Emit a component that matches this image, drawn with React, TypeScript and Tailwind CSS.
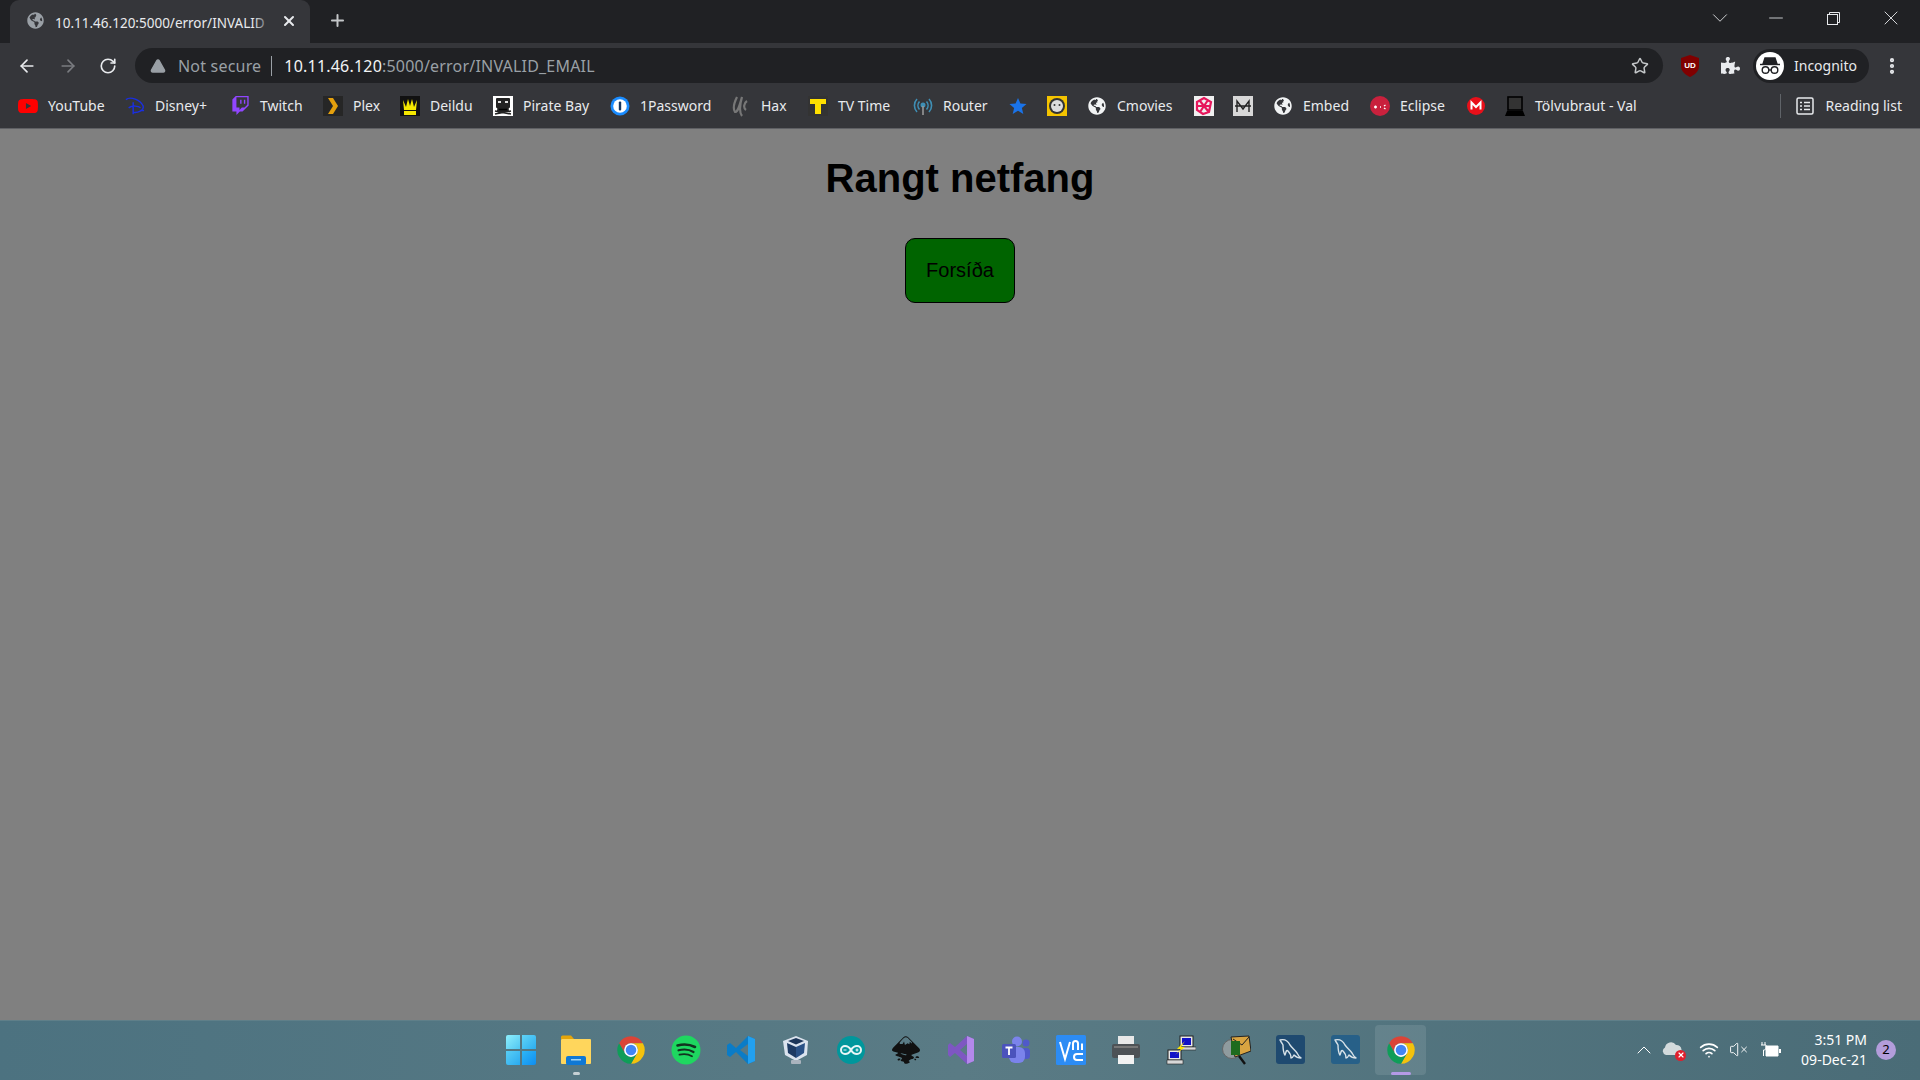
import React from "react";
import { ArrowLeft, ArrowRight, RotateCw, Star, ChevronDown, ChevronUp, Plus, X, Minus, EllipsisVertical, TriangleAlert, VolumeX, Wifi } from "lucide-react";
import { FaGlobeAmericas, FaPuzzlePiece } from "react-icons/fa";
import { SiInkscape, SiYoutube, SiTwitch } from "react-icons/si";

const Chrome = ({ size = 36 }: { size?: number }) => (
  <svg width={size} height={size} viewBox="0 0 48 48">
    <path d="M4.95 13A22 22 0 0 1 43.05 13L24 13A11 11 0 0 0 14.47 29.5Z" fill="#db4437" />
    <path d="M43.05 13A22 22 0 0 1 24 46L33.53 29.5A11 11 0 0 0 24 13Z" fill="#f4c20d" />
    <path d="M24 46A22 22 0 0 1 4.95 13L14.47 29.5A11 11 0 0 0 33.53 29.5Z" fill="#0f9d58" />
    <circle cx="24" cy="24" r="11" fill="#fff" />
    <circle cx="24" cy="24" r="8.5" fill="#4285f4" />
  </svg>
);

const Dolphin = () => (
  <svg width="25" height="25" viewBox="0 0 25 25" fill="none" stroke="#d8e2e8" strokeWidth="1.4" strokeLinejoin="round">
    <path d="M2 3C6 2 10 4 12 8C14 11 17 13 19 16C20 18 21 20 23 21C20 21 18 20 16 18C15 20 14 21 13 21C13 18 12 16 10 14C8 12 8 16 7 18C5 15 5 11 5 8C4 6 3 5 2 3Z" />
  </svg>
);

const bookmarks: { label?: string; icon: React.ReactNode; w: string }[] = [
  { label: "YouTube", w: "w-[107px]", icon: <SiYoutube size={20} color="#ff0000" /> },
  {
    label: "Disney+",
    w: "w-[105px]",
    icon: (
      <svg width="22" height="20" viewBox="0 0 22 20" fill="none" stroke="#1a2fe0" strokeWidth="1.6">
        <path d="M1 3C6 -1 17 3 20 10C21 15 14 18 9 17" />
        <path d="M9 6V19M4 12C8 9 15 10 17 12M17 15h4" />
      </svg>
    ),
  },
  { label: "Twitch", w: "w-[93px]", icon: <SiTwitch size={19} color="#9146ff" /> },
  {
    label: "Plex",
    w: "w-[77px]",
    icon: (
      <svg width="20" height="20" viewBox="0 0 20 20">
        <rect width="20" height="20" fill="#262626" />
        <path d="M5 2H10L15 10L10 18H5L10 10Z" fill="#e5a00d" />
      </svg>
    ),
  },
  {
    label: "Deildu",
    w: "w-[93px]",
    icon: (
      <svg width="20" height="20" viewBox="0 0 20 20">
        <rect width="20" height="20" fill="#111" />
        <path d="M3 4L6 11L8 3L10 10L12 3L14 11L17 4L16 14H4Z" fill="#f5e800" />
        <rect x="4" y="15" width="12" height="4" fill="#f5e800" />
      </svg>
    ),
  },
  {
    label: "Pirate Bay",
    w: "w-[117px]",
    icon: (
      <svg width="20" height="20" viewBox="0 0 20 20">
        <rect width="20" height="20" fill="#fff" />
        <rect x="3" y="2" width="14" height="10" rx="1" fill="#222" />
        <rect x="5" y="5" width="3" height="2" fill="#ddd" />
        <rect x="12" y="5" width="3" height="2" fill="#ddd" />
        <path d="M2 15L18 18M18 15L2 18M5 12h10v3H5Z" stroke="#222" strokeWidth="1.6" />
      </svg>
    ),
  },
  {
    label: "1Password",
    w: "w-[121px]",
    icon: (
      <svg width="20" height="20" viewBox="0 0 20 20">
        <circle cx="10" cy="10" r="9.5" fill="#1a8cff" />
        <circle cx="10" cy="10" r="6.8" fill="#fff" />
        <rect x="8.8" y="5.5" width="2.4" height="9" rx="1" fill="#16365f" />
      </svg>
    ),
  },
  {
    label: "Hax",
    w: "w-[77px]",
    icon: (
      <svg width="20" height="22" viewBox="0 0 20 22" fill="none" stroke="#777" strokeWidth="2.2">
        <path d="M6 2C3 8 2 14 4 17C7 17 8 12 11 2C9 9 8 17 11 21M16 6C13 8 12 13 15 15" />
      </svg>
    ),
  },
  {
    label: "TV Time",
    w: "w-[105px]",
    icon: (
      <svg width="20" height="20" viewBox="0 0 20 20">
        <rect width="20" height="20" fill="#333" />
        <path d="M2 3H18V8H13V18H7V8H2Z" fill="#ffe000" />
      </svg>
    ),
  },
  {
    label: "Router",
    w: "w-[95px]",
    icon: (
      <svg width="20" height="20" viewBox="0 0 20 20" fill="none" stroke="#3f8fb5" strokeWidth="1.6">
        <path d="M6.5 5.5a6 6 0 0 0 0 8M13.5 5.5a6 6 0 0 1 0 8M4 3a9.5 9.5 0 0 0 0 13M16 3a9.5 9.5 0 0 1 0 13" />
        <circle cx="10" cy="9" r="1.7" fill="#3f8fb5" />
        <path d="M10 10v9" stroke="#999" />
      </svg>
    ),
  },
  {
    w: "w-[39px]",
    icon: (
      <svg width="18" height="18" viewBox="0 0 20 20">
        <path d="M10 1L12.7 7.2L19.5 7.8L14.3 12.2L15.9 19L10 15.4L4.1 19L5.7 12.2L.5 7.8L7.3 7.2Z" fill="#1a73e8" />
      </svg>
    ),
  },
  {
    w: "w-[40px]",
    icon: (
      <svg width="20" height="20" viewBox="0 0 20 20">
        <rect width="20" height="20" fill="#f5c400" />
        <circle cx="10" cy="10" r="8" fill="#333" />
        <circle cx="10" cy="10" r="6" fill="#ddd" />
        <circle cx="7.5" cy="9" r="1" fill="#333" />
        <circle cx="12.5" cy="9" r="1" fill="#333" />
      </svg>
    ),
  },
  { label: "Cmovies", w: "w-[107px]", icon: <FaGlobeAmericas size={18} color="#f1f3f4" /> },
  {
    w: "w-[39px]",
    icon: (
      <svg width="20" height="20" viewBox="0 0 20 20">
        <rect width="20" height="20" fill="#f0f0f0" />
        <path d="M3 6L10 2L17 6L15 16L9 18L3 14ZM6 5L14 15M14 4L6 16M3 10H17" fill="none" stroke="#e6175c" strokeWidth="2.2" />
      </svg>
    ),
  },
  {
    w: "w-[40px]",
    icon: (
      <svg width="20" height="20" viewBox="0 0 20 20">
        <rect width="20" height="20" fill="#d8d8d8" />
        <path d="M4 16V5L10 13L16 5V16M2 10H18" fill="none" stroke="#222" strokeWidth="1.4" />
      </svg>
    ),
  },
  { label: "Embed", w: "w-[97px]", icon: <FaGlobeAmericas size={18} color="#f1f3f4" /> },
  {
    label: "Eclipse",
    w: "w-[96px]",
    icon: (
      <svg width="20" height="20" viewBox="0 0 20 20">
        <circle cx="10" cy="10" r="10" fill="#c9213d" />
        <path d="M4 11h3M5.5 9.5v3M10 11h1M14 10l1.5-1M14 12l1.5 1" stroke="#fff" strokeWidth="1.4" />
      </svg>
    ),
  },
  {
    w: "w-[39px]",
    icon: (
      <svg width="18" height="18" viewBox="0 0 18 18">
        <circle cx="9" cy="9" r="9" fill="#e9101a" />
        <path d="M4.5 12.5V5.5L9 10L13.5 5.5V12.5" fill="none" stroke="#fff" strokeWidth="2" />
      </svg>
    ),
  },
  {
    label: "Tölvubraut - Val",
    w: "w-auto",
    icon: (
      <svg width="20" height="20" viewBox="0 0 20 20">
        <rect x="3" y="1" width="14" height="13" fill="none" stroke="#000" strokeWidth="1.6" />
        <rect x="4" y="2" width="12" height="11" fill="#333" />
        <path d="M0 20L2 15H18L20 20Z" fill="#000" />
      </svg>
    ),
  },
];

const Windows = () => (
  <div className="grid h-[30px] w-[30px] grid-cols-2 gap-[2px]">
    <span className="rounded-tl-[2px] bg-gradient-to-br from-[#8deffc] to-[#4fc6f2]" />
    <span className="rounded-tr-[2px] bg-gradient-to-br from-[#5fd4f7] to-[#2aaef0]" />
    <span className="rounded-bl-[2px] bg-gradient-to-br from-[#58cef5] to-[#28aaf0]" />
    <span className="rounded-br-[2px] bg-gradient-to-br from-[#2eb6f5] to-[#0f8df0]" />
  </div>
);

const taskbarIcons: { key: string; icon: React.ReactNode; active?: boolean }[] = [
  { key: "start", icon: <Windows /> },
  {
    key: "files",
    icon: (
      <svg width="32" height="30" viewBox="0 0 32 30">
        <path d="M1 2a1.5 1.5 0 0 1 1.5-1.5H11L14 4H1Z" fill="#e5a50a" />
        <rect x="1" y="4" width="30" height="25" rx="1" fill="#ffd65c" />
        <rect x="6" y="21" width="20" height="9" rx="2" fill="#0f78d4" />
        <rect x="11" y="24" width="10" height="1.5" fill="#9fd4f5" />
      </svg>
    ),
  },
  { key: "chrome", icon: <Chrome size={30} /> },
  {
    key: "spotify",
    icon: (
      <svg width="30" height="30" viewBox="0 0 30 30" fill="none" stroke="#12331f" strokeLinecap="round">
        <circle cx="15" cy="15" r="14.5" fill="#1ed760" stroke="none" />
        <path d="M6.5 10.5C12 9 19 9.5 24 12" strokeWidth="2.6" />
        <path d="M7.5 15.3C12.5 14 18.5 14.5 22.5 17" strokeWidth="2.2" />
        <path d="M8.5 19.7C13 18.7 17.5 19.2 21 21.2" strokeWidth="1.8" />
      </svg>
    ),
  },
  {
    key: "vscode",
    icon: (
      <svg width="30" height="30" viewBox="0 0 30 30">
        <path d="M22 1L29 4V26L22 29L10 17L4 22L1 20V10L4 8L10 13ZM22 9L14 15L22 21Z" fill="#0a7cc7" />
        <path d="M22 1L29 4V26L22 29Z" fill="#22a0ef" />
      </svg>
    ),
  },
  {
    key: "vbox",
    icon: (
      <svg width="28" height="30" viewBox="0 0 28 30">
        <path d="M14 1L26 6L25 20L14 26L3 20L1 6Z" fill="#dbe3ee" />
        <path d="M5 8L14 12V23L6 18Z" fill="#1d3a63" />
        <path d="M23 8L14 12V23L22 18Z" fill="#2a5186" />
        <path d="M6 6L14 3L22 6L14 9.5Z" fill="#1c3559" />
        <rect x="9" y="25" width="10" height="4" rx="1" fill="#aab3bd" />
      </svg>
    ),
  },
  {
    key: "arduino",
    icon: (
      <svg width="28" height="28" viewBox="0 0 28 28" fill="none" stroke="#e8f6f6" strokeWidth="2">
        <circle cx="14" cy="14" r="14" fill="#00979c" stroke="none" />
        <path d="M14 14C12 10.5 10 10 8 10A4 4 0 0 0 8 18C10 18 12 17.5 14 14C16 10.5 18 10 20 10A4 4 0 0 1 20 18C18 18 16 17.5 14 14Z" />
        <path d="M6.5 14H9.5M18.5 14H21.5M20 12.5V15.5" strokeWidth="1.2" />
      </svg>
    ),
  },
  {
    key: "inkscape",
    icon: <SiInkscape size={28} color="#111" />,
  },
  {
    key: "vs",
    icon: (
      <svg width="28" height="30" viewBox="0 0 28 30">
        <path d="M20 1L27 4V26L20 29L8 18L3 22L1 20V10L3 8L8 12ZM20 9L13 15L20 21Z" fill="#7e57c2" />
        <path d="M20 1L27 4V26L20 29Z" fill="#b388eb" />
      </svg>
    ),
  },
  {
    key: "teams",
    icon: (
      <svg width="30" height="28" viewBox="0 0 30 28">
        <circle cx="25" cy="7" r="3.5" fill="#5059c9" />
        <rect x="20" y="12" width="9" height="11" rx="3.5" fill="#5059c9" />
        <circle cx="16" cy="5.5" r="5" fill="#7b83eb" />
        <rect x="8" y="11" width="16" height="16" rx="6" fill="#7b83eb" />
        <rect x="1" y="8" width="14" height="14" rx="1.5" fill="#4b53bc" />
        <path d="M4.5 11.5H11.5M8 11.5V19" stroke="#fff" strokeWidth="1.8" />
      </svg>
    ),
  },
  {
    key: "vnc",
    icon: (
      <svg width="30" height="30" viewBox="0 0 30 30" fill="none" stroke="#fff" strokeWidth="2">
        <rect width="30" height="30" rx="1.5" fill="#2c8cf4" stroke="none" />
        <path d="M4 7L9 24L14 7M17 15V8.5A2.5 2.5 0 0 1 22 8.5V15M26 8.5V15" />
        <path d="M27 19H21A3 3 0 0 0 21 25H27" />
      </svg>
    ),
  },
  {
    key: "printer",
    icon: (
      <svg width="30" height="30" viewBox="0 0 30 30">
        <rect x="7" y="1" width="16" height="9" fill="#e8e8e8" />
        <rect x="1" y="9" width="28" height="14" rx="2" fill="#4d5256" />
        <rect x="3" y="11" width="24" height="2" fill="#777" />
        <rect x="7" y="20" width="16" height="9" fill="#f2f2f2" />
      </svg>
    ),
  },
  {
    key: "putty",
    icon: (
      <svg width="30" height="30" viewBox="0 0 30 30">
        <rect x="14" y="1" width="13" height="11" fill="#e8e8e8" stroke="#222" />
        <rect x="16" y="3" width="9" height="7" fill="#1111c8" />
        <rect x="14" y="12" width="16" height="3" fill="#d8d8d8" stroke="#222" strokeWidth=".6" />
        <rect x="2" y="15" width="13" height="10" fill="#e8e8e8" stroke="#222" />
        <rect x="4" y="17" width="9" height="6" fill="#1111c8" />
        <rect x="1" y="25" width="16" height="4" fill="#d8d8d8" stroke="#222" strokeWidth=".6" />
        <path d="M19 6L11 14L15 14L9 20L19 12L15 12Z" fill="#ffe600" />
      </svg>
    ),
  },
  {
    key: "sniff",
    icon: (
      <svg width="30" height="30" viewBox="0 0 30 30">
        <circle cx="11" cy="14" r="9.5" fill="#8f9b9e" stroke="#666" />
        <path d="M18 21L24 29" stroke="#111" strokeWidth="2.4" />
        <path d="M10 2L28 1L30 16L14 22Z" fill="#d9a441" stroke="#222" />
        <path d="M12 4L21 10L28 2" fill="none" stroke="#222" />
        <rect x="10" y="6" width="9" height="14" fill="#1e6b1e" />
      </svg>
    ),
  },
  { key: "mysql1", icon: <span className="flex h-[29px] w-[29px] items-center justify-center rounded-[3px] bg-[#1f4a70]"><Dolphin /></span> },
  { key: "mysql2", icon: <span className="flex h-[29px] w-[29px] items-center justify-center rounded-[3px] bg-[#276088]"><Dolphin /></span> },
  { key: "chrome2", active: true, icon: <Chrome size={30} /> },
];

export default function App() {
  return (
    <div className="flex h-[1080px] w-[1920px] flex-col overflow-hidden bg-[#808080] font-['Noto_Sans',sans-serif]">
      {/* tab strip */}
      <div className="flex h-[43px] shrink-0 items-end bg-[#202124] pl-[10px]">
        <div className="flex h-[43px] w-[300px] items-center rounded-t-[9px] bg-[#35363a] pb-[2px] pl-[17px] pr-[13px]">
          <FaGlobeAmericas size={17} color="#9aa0a6" className="shrink-0" />
          <div className="relative ml-[11px] h-[20px] w-[218px] -translate-y-[1px]">
            <span className="whitespace-nowrap text-[13.5px] leading-[20px] text-[#e8eaed]">10.11.46.120:5000/error/INVALID</span>
            <span className="absolute inset-y-0 right-0 w-[20px] bg-gradient-to-r from-transparent to-[#35363a]" />
          </div>
          <X size={16} strokeWidth={3} color="#e8eaed" className="ml-auto shrink-0" />
        </div>
        <div className="flex h-[43px] items-center pb-[2px] pl-[18px]">
          <Plus size={19} strokeWidth={2.5} color="#c4c7c9" />
        </div>
        <div className="ml-auto flex h-[36px] items-center self-start text-[#e8eaed]">
          <ChevronDown size={26} strokeWidth={0.8} className="mr-[32px]" />
          <Minus size={22} strokeWidth={0.9} className="mr-[40px]" />
          <svg width="13" height="13" viewBox="0 0 13 13" fill="none" stroke="#e8eaed" className="mr-[39px]">
            <rect x=".5" y="2.5" width="10" height="10" />
            <path d="M2.5 2.5V.5H12.5V10.5H10.5" />
          </svg>
          <X size={24} strokeWidth={0.9} className="mr-[17px]" />
        </div>
      </div>

      {/* toolbar */}
      <div className="flex h-[40px] shrink-0 items-center bg-[#35363a] pt-[5px]">
        <ArrowLeft size={20} strokeWidth={2} color="#e8eaed" className="ml-[17px]" />
        <ArrowRight size={20} strokeWidth={2} color="#7a7c80" className="ml-[21px]" />
        <RotateCw size={18} strokeWidth={2.2} color="#e8eaed" className="ml-[21px]" />
        <div className="ml-[18px] flex h-[35px] w-[1528px] items-center rounded-full bg-[#202124] pl-[15px] pr-[14px]">
          <TriangleAlert size={16} fill="#9aa0a6" color="#9aa0a6" />
          <span className="ml-[12px] text-[16px] tracking-[0.2px] text-[#9aa0a6]">Not secure</span>
          <span className="ml-[10px] h-[20px] w-px bg-[#9aa0a6]" />
          <span className="ml-[12px] text-[16px] tracking-[0.2px] text-[#f1f3f4]">10.11.46.120<span className="text-[#9aa0a6]">:5000/error/INVALID_EMAIL</span></span>
          <Star size={18} color="#c4c7c9" strokeWidth={2} className="ml-auto" />
        </div>
        <svg width="20" height="24" viewBox="0 0 20 24" className="ml-[17px]">
          <path d="M10 1L19 4V12C19 18 14 21 10 23C6 21 1 18 1 12V4Z" fill="#800000" />
          <text x="10" y="14" textAnchor="middle" fontSize="8" fontWeight="700" fill="#fff" fontFamily="Liberation Sans">UD</text>
        </svg>
        <FaPuzzlePiece size={19} color="#e8eaed" className="ml-[21px]" />
        <div className="ml-[13px] flex h-[34px] w-[116px] items-center rounded-full bg-[#202124] pl-[3px]">
          <span className="flex h-[28px] w-[28px] items-center justify-center rounded-full bg-white">
            <svg width="20" height="18" viewBox="0 0 20 18" fill="none" stroke="#202124" strokeWidth="1.4">
              <path d="M5 1H15L17 7H3Z" fill="#202124" />
              <path d="M0 7.5H20" />
              <circle cx="5.5" cy="13" r="3.3" />
              <circle cx="14.5" cy="13" r="3.3" />
              <path d="M8.8 13H11.2" />
            </svg>
          </span>
          <span className="ml-[10px] text-[14px] text-[#e8eaed]">Incognito</span>
        </div>
        <EllipsisVertical size={20} strokeWidth={3} color="#e8eaed" className="ml-[13px]" />
      </div>

      {/* bookmarks bar */}
      <div className="flex h-[46px] shrink-0 items-center border-b border-[#5f6064] bg-[#35363a] pl-[18px] pr-[18px] text-[14px] text-[#e8eaed]">
        {bookmarks.map((b, i) => (
          <div key={i} className={"flex items-center " + b.w}>
            <span className="flex h-5 w-5 shrink-0 items-center justify-center">{b.icon}</span>
            {b.label && <span className="ml-[10px] whitespace-nowrap">{b.label}</span>}
          </div>
        ))}
        <div className="ml-auto flex items-center">
          <span className="mr-[15px] h-[24px] w-px bg-[#5f6368]" />
          <svg width="18" height="18" viewBox="0 0 18 18" fill="none" stroke="#e8eaed" strokeWidth="1.5">
            <rect x="1" y="1" width="16" height="16" rx="1.5" />
            <path d="M4 5.5H6M8 5.5H14M4 9H6M8 9H14M4 12.5H6M8 12.5H14" />
          </svg>
          <span className="ml-[11px] whitespace-nowrap">Reading list</span>
        </div>
      </div>

      {/* page */}
      <main className="flex min-h-0 flex-1 flex-col items-center font-['Liberation_Sans',sans-serif] text-black">
        <h1 className="mt-[26px] text-[40px] font-bold leading-[46px]">Rangt netfang</h1>
        <a className="mt-[37px] flex h-[65px] w-[110px] items-center justify-center rounded-[10px] border border-black bg-[#006400] pb-[2px] text-[20px]">Forsíða</a>
      </main>

      {/* taskbar */}
      <div className="grid h-[60px] shrink-0 grid-cols-[1fr_auto_1fr] border-t border-[#5f7f89] bg-gradient-to-r from-[#4c7280] via-[#5a7b85] to-[#4a6c77] pb-[2px]">
        <div />
        <div className="flex items-center pl-[1px]">
          {taskbarIcons.map((t) => (
            <div key={t.key} className="relative flex h-[50px] w-[55px] items-center justify-center">
              {t.active && <span className="absolute inset-y-0 left-[2px] right-[2px] rounded-[4px] bg-white/10" />}
              <span className="relative flex">{t.icon}</span>
              {t.key === "files" && <span className="absolute bottom-0 left-[25px] h-[3px] w-[7px] rounded-full bg-[#c6d0d4]" />}
              {t.active && <span className="absolute bottom-0 left-[18px] h-[3px] w-[20px] rounded-full bg-[#b49ae6]" />}
            </div>
          ))}
        </div>
        <div className="flex items-center justify-end pr-[24px] text-[#fff]">
          <ChevronUp size={24} strokeWidth={1} />
          <div className="relative ml-[6px] h-[20px] w-[22px]">
            <svg width="20" height="14" viewBox="0 0 20 14" className="mt-[2px]"><path d="M4 13A4 4 0 0 1 3 5.5A6 6 0 0 1 14 3A5 5 0 0 1 15 13Z" fill="#d3dadc" /></svg>
            <span className="absolute -bottom-[1px] -right-[2px] flex h-[11px] w-[11px] items-center justify-center rounded-full bg-[#e01f2d]"><X size={8} strokeWidth={3.5} color="#fff" /></span>
          </div>
          <Wifi size={20} strokeWidth={2} className="ml-[15px]" />
          <VolumeX size={19} strokeWidth={1.2} className="ml-[10px]" />
          <svg width="20" height="16" viewBox="0 0 20 16" fill="none" stroke="#fff" className="ml-[13px]">
            <path d="M5 4H17V14H5Z" fill="#fff" />
            <path d="M18 7H20V11H18Z" fill="#fff" stroke="none" />
            <path d="M1 0V3M4 0V3M0 3H5V6C5 8 3 8 2.5 8V14" />
          </svg>
          <div className="ml-[20px] flex flex-col items-end text-[14px] leading-[20px]">
            <span>3:51 PM</span>
            <span>09-Dec-21</span>
          </div>
          <span className="ml-[9px] flex h-[20px] w-[20px] items-center justify-center rounded-full bg-[#b39ddb] text-[13px] text-black">2</span>
        </div>
      </div>
    </div>
  );
}
